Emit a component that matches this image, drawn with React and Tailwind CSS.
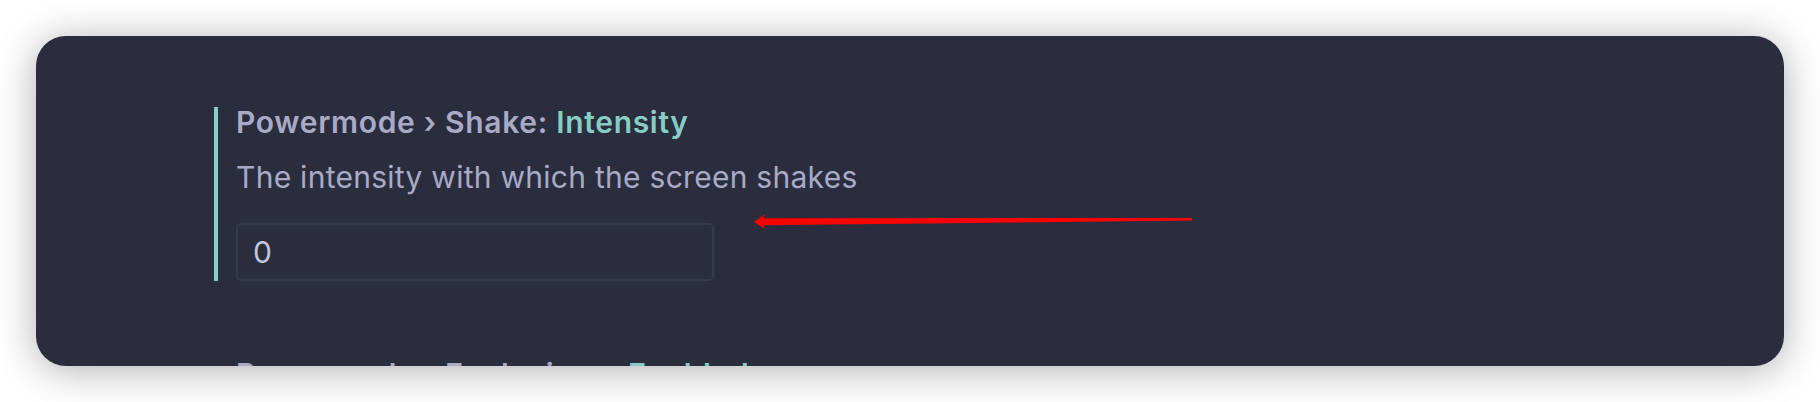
import React from "react";

function SettingItem({ prefix, name, description, value, active }) {
  return (
    <div className={active ? "border-l-4 border-[#86cdc3] pl-[18px]" : "border-l-4 border-transparent pl-[18px]"}>
      <div className="text-[30px] leading-[30px] tracking-[0.68px] font-semibold text-[#a8aac6] whitespace-nowrap">
        {prefix}
        <span className="text-[#86cdc3]">{name}</span>
      </div>
      {description && (
        <div className="mt-[25px] text-[30px] leading-[30px] tracking-[0.27px] text-[#a8aac6] whitespace-nowrap">
          {description}
        </div>
      )}
      {value !== undefined && (
        <div className="mt-[31px] w-[478px] h-[58px] rounded-[5px] border-2 border-[#363a4d] flex items-center pl-[15px] text-[30px] text-[#c2c4dc]">
          {value}
        </div>
      )}
    </div>
  );
}

export default function App() {
  return (
    <div
      className="relative w-[1820px] h-[402px] bg-white pt-[36px] px-[36px] overflow-hidden"
      style={{ fontFamily: "Inter, 'Noto Sans', sans-serif" }}
    >
      <div className="h-[330px] rounded-[30px] bg-[#2a2d3e] shadow-[0_4px_40px_rgba(0,0,0,0.32)] overflow-hidden pt-[71px] pl-[178px]">
        <SettingItem
          active
          prefix="Powermode › Shake: "
          name="Intensity"
          description="The intensity with which the screen shakes"
          value="0"
        />
        <div className="mt-[78px]">
          <SettingItem prefix="Powermode › Explosions: " name="Enabled" />
        </div>
      </div>
      <svg
        className="absolute left-0 top-0 pointer-events-none"
        width="1820"
        height="402"
        viewBox="0 0 1820 402"
      >
        <polygon
          fill="#ff0000"
          points="754,221.8 765,214.3 763.5,218.3 1192,218 1192,220.5 763.5,225.3 765,229.3"
        />
      </svg>
    </div>
  );
}
